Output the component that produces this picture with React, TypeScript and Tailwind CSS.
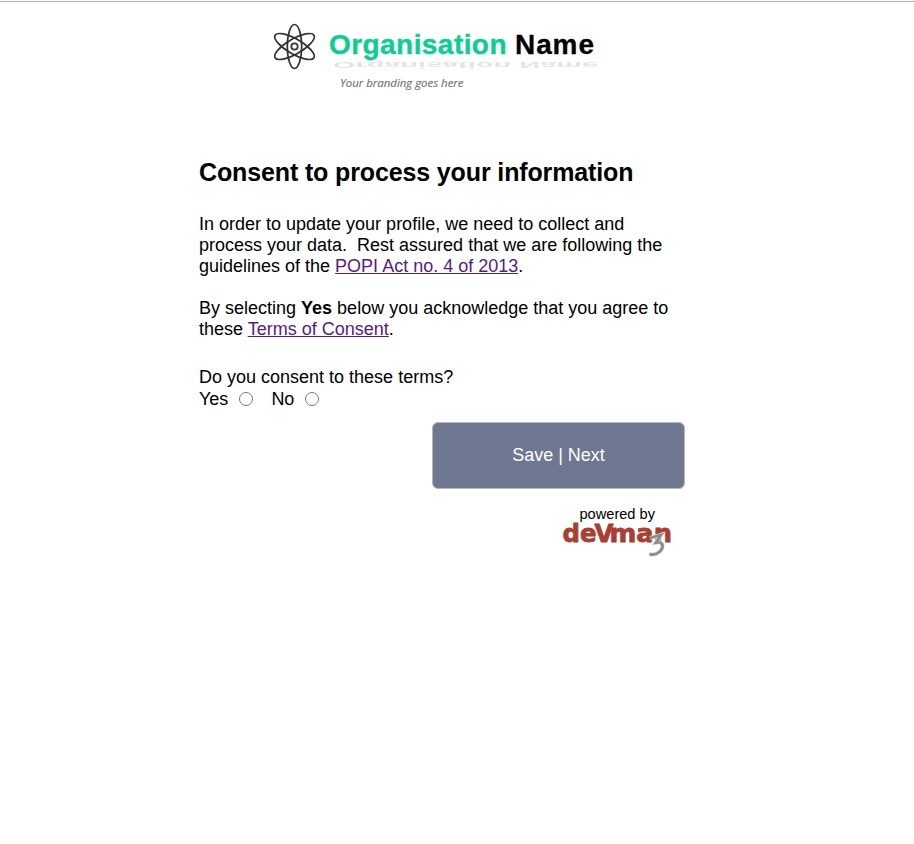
function OrganisationLogo() {
  return (
    <svg width="340" height="80" viewBox="264 17 340 80" className="ml-[264px] block overflow-visible" role="img" aria-label="Organisation Name">
      <defs>
        <filter id="soft" x="-5%" y="-20%" width="110%" height="140%">
          <feGaussianBlur stdDeviation="0.6" />
        </filter>
      </defs>
      <g fill="none" stroke="#333" strokeWidth="1.7">
        <ellipse cx="294.5" cy="46.5" rx="7.2" ry="22" />
        <ellipse cx="294.5" cy="46.5" rx="7.5" ry="22.5" transform="rotate(60 294.5 46.5)" />
        <ellipse cx="294.5" cy="46.5" rx="7.5" ry="22.5" transform="rotate(-60 294.5 46.5)" />
        <circle cx="294.5" cy="46.5" r="3.2" />
      </g>
      <g fontFamily="'Liberation Sans', Arial, sans-serif" fontWeight="700" fontSize="28">
        <text x="329" y="54" fill="#0dcc94" stroke="#0dcc94" strokeWidth="0.4" textLength="177.5" lengthAdjust="spacing">Organisation</text>
        <text x="515" y="54" fill="#000" stroke="#000" strokeWidth="0.3" textLength="79" lengthAdjust="spacing">Name</text>
        <g aria-hidden="true" filter="url(#soft)">
          <text transform="translate(333 62) scale(1 -0.3)" fill="#777" x="0" y="0" textLength="265" lengthAdjust="spacingAndGlyphs" className="opacity-20">Organisation Name</text>
        </g>
      </g>
      <text x="340" y="87" fill="#777" stroke="#777" strokeWidth="0.2" fontFamily="'Open Sans', sans-serif" fontStyle="italic" fontSize="11.5" textLength="123.5" lengthAdjust="spacingAndGlyphs">Your branding goes here</text>
    </svg>
  );
}

function DevmanLogo() {
  return (
    <svg width="112" height="36" viewBox="561 522 112 36" className="block overflow-visible" role="img" aria-label="devman 3">
      <g fontFamily="'DejaVu Sans', Verdana, sans-serif" fontWeight="700" fill="#a93e34" stroke="#a93e34" strokeWidth="0.8">
        <text x="562.5" y="542" fontSize="25" textLength="34" lengthAdjust="spacingAndGlyphs">de</text>
        <text x="594.5" y="542" fontSize="25" textLength="19" lengthAdjust="spacingAndGlyphs">V</text>
        <text x="609.5" y="542" fontSize="25" textLength="62.5" lengthAdjust="spacingAndGlyphs">man</text>
      </g>
      <path d="M650 538 L661 534.8 L656 542.5 C662 541.5 664 545 661.5 549.5 C659 553.5 654 555.5 649.5 554" fill="none" stroke="#ddd" strokeWidth="4" />
      <path d="M650 538 L661 534.8 L656 542.5 C662 541.5 664 545 661.5 549.5 C659 553.5 654 555.5 649.5 554" fill="none" stroke="#8c8c8c" strokeWidth="2.8" />
    </svg>
  );
}

export default function App() {
  return (
    <div className="min-h-[844px] bg-white pt-px font-['Liberation_Sans',Arial,sans-serif] text-lg leading-[21px] text-black">
      <header className="border-t border-[#b0b0b0] pt-[15px]">
        <OrganisationLogo />
      </header>
      <main className="ml-[199px] w-[486px]">
        <h1 className="pt-[60px] text-[25px] font-bold leading-[30px] tracking-[-0.13px] whitespace-nowrap">Consent to process your information</h1>
        <p className="mt-[27px] whitespace-nowrap">
          In order to update your profile, we need to collect and
          <br />
          process your data.&nbsp; Rest assured that we are following the
          <br />
          guidelines of the <a href="#popi" className="text-[#551a8b] underline">POPI Act no. 4 of 2013</a>.
        </p>
        <p className="mt-[21px] whitespace-nowrap">
          By selecting <b>Yes</b> below you acknowledge that you agree to
          <br />
          these <a href="#terms" className="text-[#551a8b] underline">Terms of Consent</a>.
        </p>
        <fieldset className="mt-[27px]">
          <legend>Do you consent to these terms?</legend>
          <div className="flex h-[22px] items-center">
            <label className="flex items-center">
              Yes
              <input type="radio" name="consent" className="ml-[11px] h-3.5 w-3.5" />
            </label>
            <label className="ml-[18px] flex items-center">
              No
              <input type="radio" name="consent" className="ml-[11px] h-3.5 w-3.5" />
            </label>
          </div>
        </fieldset>
        <button className="mt-3 ml-auto block h-[67px] w-[253px] rounded-md border border-[#b4b8bd] bg-[#6e7891] pb-0.5 text-lg text-white">Save | Next</button>
        <footer className="mt-4 ml-[362px]">
          <div className="ml-[18.5px] text-[14.6px] leading-[18px]">powered by</div>
          <div className="-mt-px">
            <DevmanLogo />
          </div>
        </footer>
      </main>
    </div>
  );
}
